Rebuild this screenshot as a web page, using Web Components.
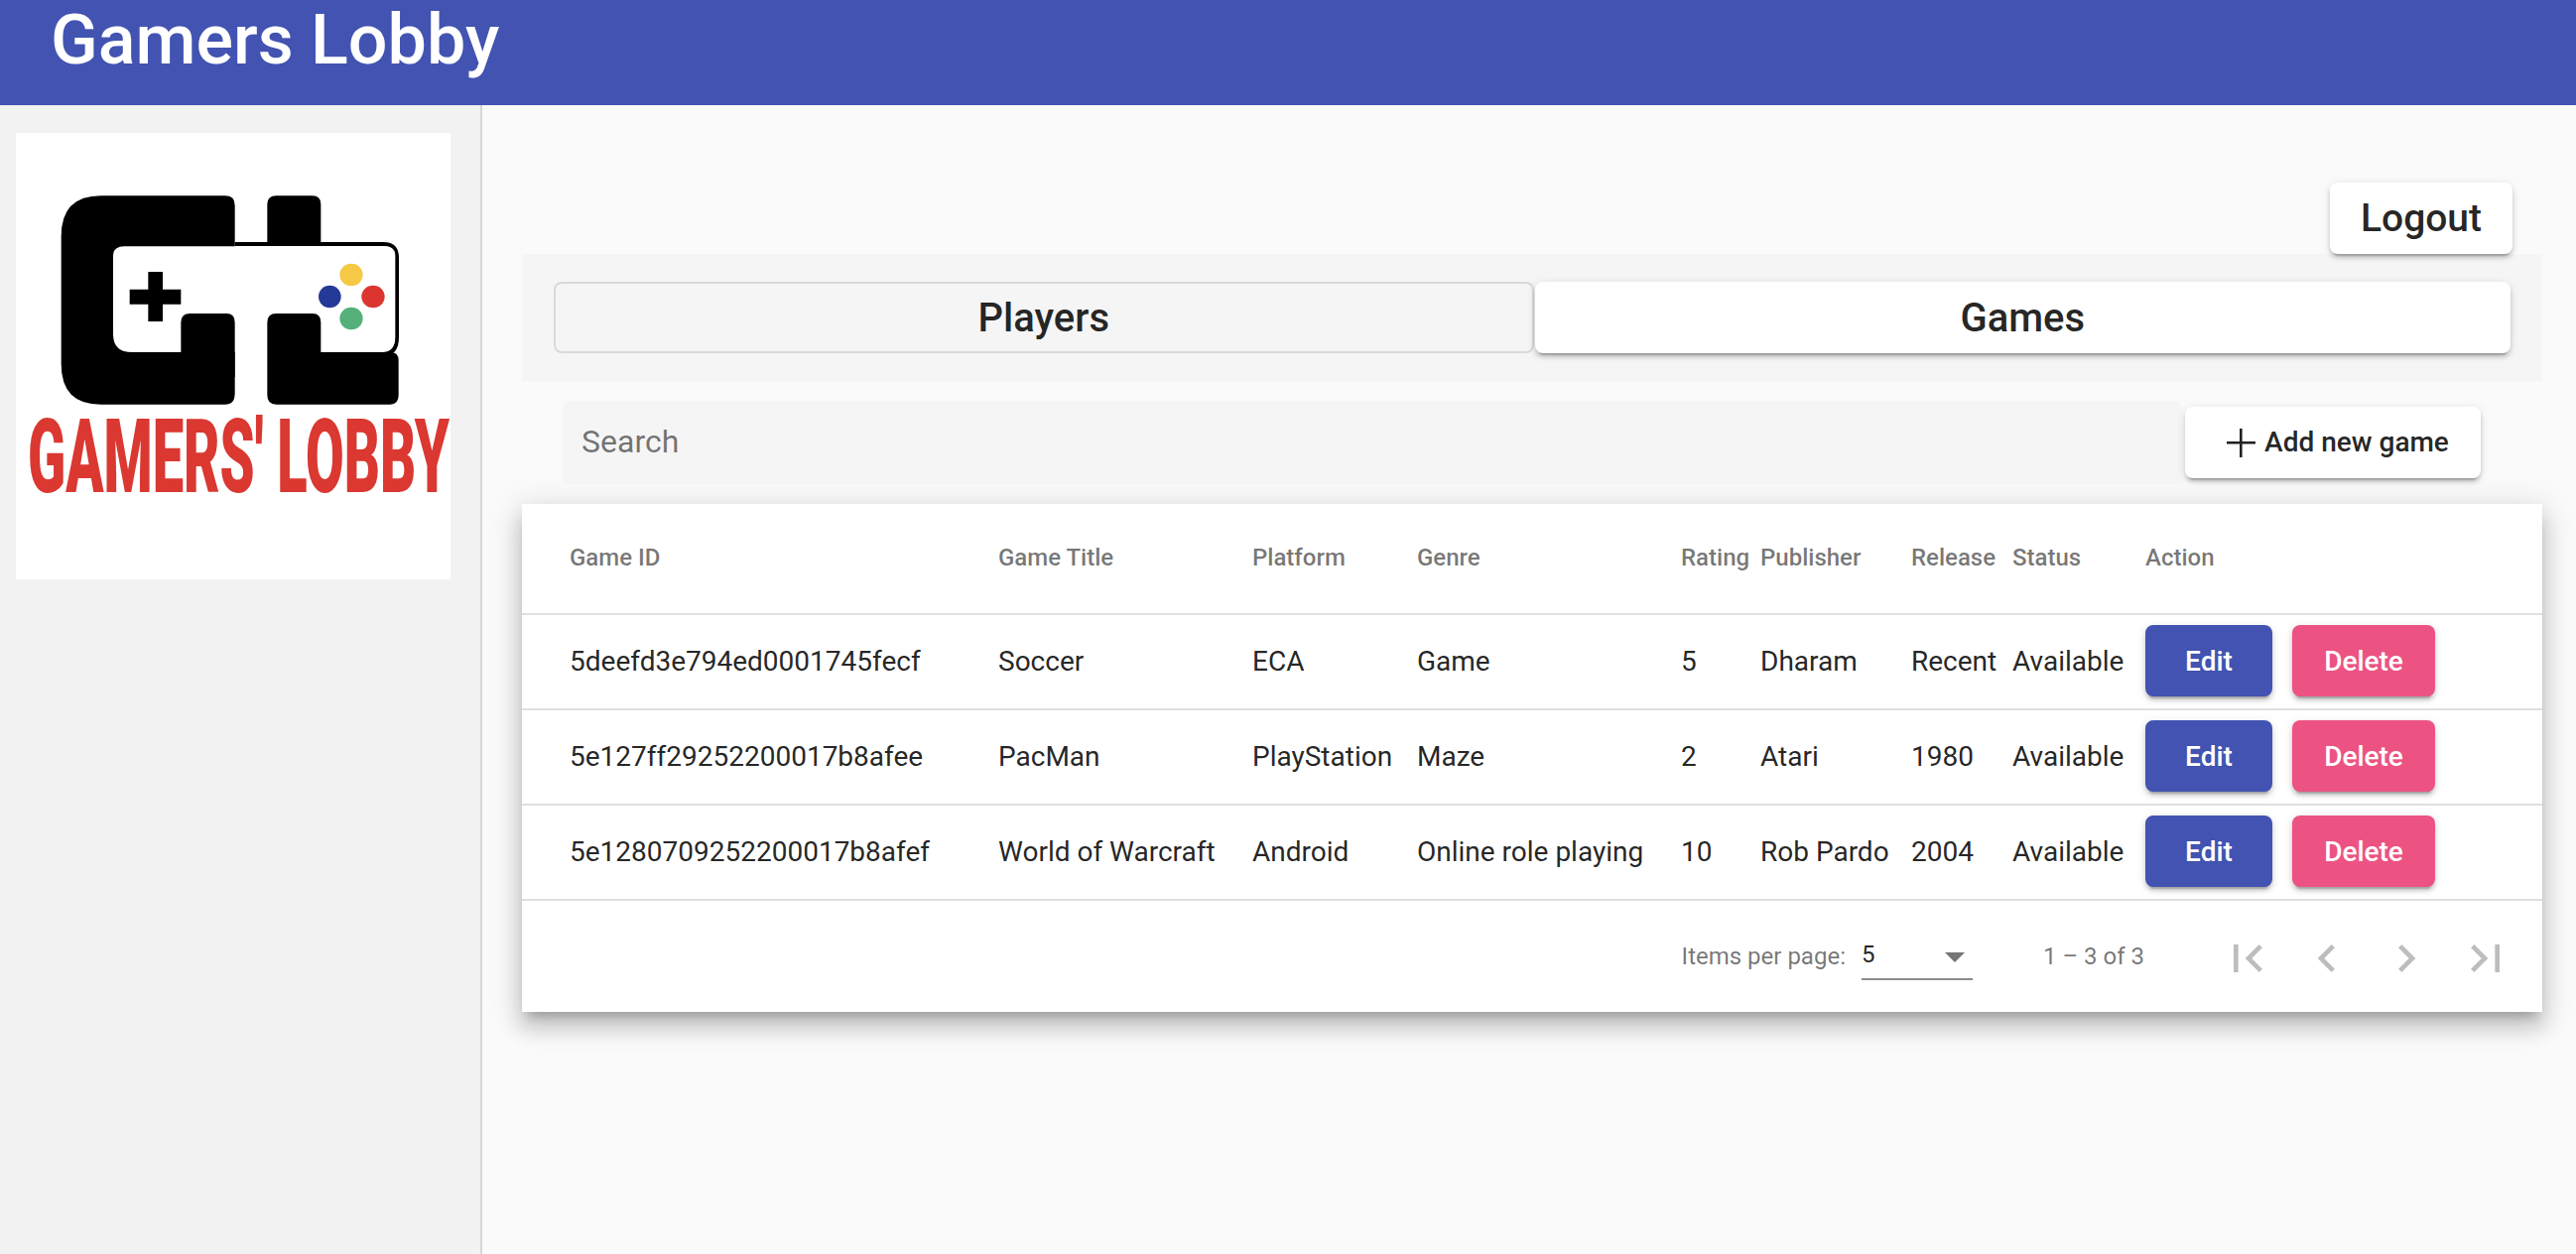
<!DOCTYPE html>
<html>
<head>
<meta charset="utf-8">
<title>Gamers Lobby</title>
<style>
  html, body { margin: 0; height: 100%; }
  body { font-family: Roboto, "Noto Sans", sans-serif; background: #fafafa; color: rgba(0,0,0,.87); overflow: hidden; }
</style>
</head>
<body>
<gl-app>
  <gl-toolbar slot="top">Gamers Lobby</gl-toolbar>
  <gl-sidebar slot="side"><gl-logo></gl-logo></gl-sidebar>
  <gl-logout-bar><gl-button size="logout">Logout</gl-button></gl-logout-bar>
  <gl-tabs>
    <gl-tab>Players</gl-tab>
    <gl-tab active>Games</gl-tab>
  </gl-tabs>
  <gl-search-bar>
    <gl-search>Search</gl-search>
    <gl-button size="add" slot="action"><gl-plus></gl-plus>Add new game</gl-button>
  </gl-search-bar>
  <gl-card>
    <gl-row header>
      <span>Game ID</span><span>Game Title</span><span>Platform</span><span>Genre</span><span>Rating</span><span>Publisher</span><span>Release</span><span>Status</span><span>Action</span>
    </gl-row>
    <gl-row>
      <span>5deefd3e794ed0001745fecf</span><span>Soccer</span><span>ECA</span><span>Game</span><span>5</span><span>Dharam</span><span>Recent</span><span>Available</span>
      <gl-actions><gl-button color="primary">Edit</gl-button><gl-button color="accent">Delete</gl-button></gl-actions>
    </gl-row>
    <gl-row>
      <span>5e127ff29252200017b8afee</span><span>PacMan</span><span>PlayStation</span><span>Maze</span><span>2</span><span>Atari</span><span>1980</span><span>Available</span>
      <gl-actions><gl-button color="primary">Edit</gl-button><gl-button color="accent">Delete</gl-button></gl-actions>
    </gl-row>
    <gl-row>
      <span>5e1280709252200017b8afef</span><span>World of Warcraft</span><span>Android</span><span>Online role playing</span><span>10</span><span>Rob Pardo</span><span>2004</span><span>Available</span>
      <gl-actions><gl-button color="primary">Edit</gl-button><gl-button color="accent">Delete</gl-button></gl-actions>
    </gl-row>
    <gl-paginator></gl-paginator>
  </gl-card>
</gl-app>

<script>
  // small helper so every element just declares its shadow markup
  class ShadowElement extends HTMLElement {
    constructor() {
      super();
      this.attachShadow({ mode: "open" });
      this.shadowRoot.innerHTML = this.markup();
    }
    markup() { return "<slot></slot>"; }
  }

  class GlApp extends ShadowElement {
    markup() {
      return `
        <style>
          :host { display: flex; flex-direction: column; height: 100vh; }
          .body { flex: 1; display: flex; min-height: 0; }
          main { flex: 1; min-width: 0; padding: 78px 34px 0 40px; }
        </style>
        <slot name="top"></slot>
        <div class="body">
          <slot name="side"></slot>
          <main><slot></slot></main>
        </div>`;
    }
  }

  class GlToolbar extends ShadowElement {
    markup() {
      return `
        <style>
          :host { display: block; flex: none; height: 106px; background: #4253b1; color: #fff; box-sizing: border-box; padding-left: 51px; }
          h1 { margin: 0; font: 500 70px/80px Roboto, sans-serif; }
        </style>
        <h1><slot></slot></h1>`;
    }
  }

  class GlSidebar extends ShadowElement {
    markup() {
      return `
        <style>
          :host { display: block; flex: none; width: 486px; box-sizing: border-box; background: #f2f2f2; border-right: 2px solid #d6d6d6; padding: 28px 0 0 16px; }
        </style>
        <slot></slot>`;
    }
  }

  class GlLogo extends ShadowElement {
    markup() {
      return `
        <style>
          :host { display: block; width: 438px; height: 450px; background: #fff; }
          svg { display: block; }
          text { font-family: Roboto, sans-serif; font-weight: 900; font-size: 309px; fill: #da3831; }
        </style>
        <svg width="438" height="450" viewBox="-72 -138 1314 1350" role="img" aria-label="Gamers' Lobby logo">
          <path d="M185 52H560Q590 52 590 80V650Q590 683 560 683H185Q65 683 65 560V175Q65 52 185 52Z"/>
          <path d="M715 52H825Q850 52 850 78V200H688V78Q688 52 715 52Z"/>
          <path d="M590 198H1040Q1080 198 1080 240V480Q1080 530 1040 530" fill="none" stroke="#000" stroke-width="12"/>
          <path d="M255 205H1045Q1075 205 1075 235V480Q1075 525 1025 525H280Q222 525 222 470V235Q222 205 255 205Z" fill="#fff"/>
          <path d="M455 408H565Q590 408 590 435V600H427V435Q427 408 455 408Z"/>
          <path d="M715 408H825Q850 408 850 435V525H1060Q1085 525 1085 550V655Q1085 683 1060 683H715Q688 683 688 655V435Q688 408 715 408Z"/>
          <path d="M272 335H328V282H372V335H427V380H372V432H328V380H272Z"/>
          <ellipse cx="942" cy="291" rx="35" ry="34" fill="#f5c945"/>
          <ellipse cx="877" cy="357" rx="34" ry="34" fill="#253a96"/>
          <ellipse cx="1008" cy="357" rx="35" ry="34" fill="#dc3530"/>
          <ellipse cx="942" cy="423" rx="35" ry="34" fill="#55b07a"/>
          <text id="wordmark" y="948">GAMERS' LOBBY</text>
        </svg>`;
    }
    connectedCallback() {
      // squeeze the wordmark into its slot, it's a condensed face in the original
      const text = this.shadowRoot.getElementById("wordmark");
      const sx = 1275 / text.getComputedTextLength();
      text.setAttribute("transform", `translate(-36 0) scale(${sx} 1)`);
    }
  }

  class GlLogoutBar extends ShadowElement {
    markup() {
      return `
        <style>:host { display: flex; justify-content: flex-end; padding-right: 30px; }</style>
        <slot></slot>`;
    }
  }

  class GlButton extends ShadowElement {
    markup() {
      return `
        <style>
          :host { display: inline-flex; align-items: center; justify-content: center; box-sizing: border-box; height: 72px; border-radius: 8px; background: #fff; color: rgba(0,0,0,.87); font: 500 28px/72px Roboto, sans-serif; flex: none; cursor: pointer;
            box-shadow: 0 6px 2px -4px rgba(0,0,0,.2), 0 4px 4px 0 rgba(0,0,0,.14), 0 2px 10px 0 rgba(0,0,0,.12); }
          :host([size="logout"]) { width: 184px; font-size: 39px; }
          :host([size="add"]) { width: 298px; margin-top: 6px; gap: 6px; padding-left: 6px; }
          :host([color="primary"]) { width: 128px; background: #4253b1; color: #fff; padding-top: 1px; }
          :host([color="accent"]) { width: 144px; background: #ec5383; color: #fff; padding-top: 1px; }
        </style>
        <slot></slot>`;
    }
  }

  class GlPlus extends ShadowElement {
    markup() {
      return `
        <style>:host { display: block; width: 36px; height: 36px; } svg { display: block; }</style>
        <svg width="36" height="36" viewBox="0 0 36 36"><path d="M17 4h2.6v13H33v2.6H19.6V33H17V19.6H4V17h13z" fill="#212121"/></svg>`;
    }
  }

  class GlTabs extends ShadowElement {
    markup() {
      return `
        <style>:host { display: flex; gap: 1px; background: #f5f5f5; padding: 28px 32px; }</style>
        <slot></slot>`;
    }
  }

  class GlTab extends ShadowElement {
    markup() {
      return `
        <style>
          :host { flex: 1; display: flex; align-items: center; justify-content: center; box-sizing: border-box; height: 72px; border-radius: 8px; border: 2px solid #d9d9d9; font: 500 40px Roboto, sans-serif; color: rgba(0,0,0,.87); cursor: pointer; }
          :host([active]) { border: 0; background: #fff; box-shadow: 0 6px 2px -4px rgba(0,0,0,.2), 0 4px 4px 0 rgba(0,0,0,.14), 0 2px 10px 0 rgba(0,0,0,.12); }
        </style>
        <slot></slot>`;
    }
  }

  class GlSearchBar extends ShadowElement {
    markup() {
      return `
        <style>:host { display: flex; align-items: flex-start; padding: 20px 62px 20px 41px; }</style>
        <slot></slot><slot name="action"></slot>`;
    }
  }

  class GlSearch extends ShadowElement {
    markup() {
      return `
        <style>
          :host { flex: 1; display: flex; align-items: center; box-sizing: border-box; height: 84px; padding: 0 0 2px 19px; margin-right: 3px; background: #f5f5f5; border-radius: 8px 8px 0 0; color: rgba(0,0,0,.54); font: 400 32px Roboto, sans-serif; }
        </style>
        <slot></slot>`;
    }
  }

  class GlCard extends ShadowElement {
    markup() {
      return `
        <style>
          :host { display: block; background: #fff;
            box-shadow: 0 10px 10px -6px rgba(0,0,0,.2), 0 16px 20px 2px rgba(0,0,0,.14), 0 6px 28px 4px rgba(0,0,0,.12); }
        </style>
        <slot></slot>`;
    }
  }

  class GlRow extends ShadowElement {
    markup() {
      return `
        <style>
          :host { display: grid; grid-template-columns: 432px 256px 166px 266px 80px 152px 102px 134px 1fr; align-items: center; box-sizing: border-box; height: 96px; padding: 0 0 2px 48px; border-bottom: 2px solid #e0e0e0; font: 400 28px Roboto, sans-serif; color: rgba(0,0,0,.87); white-space: nowrap; }
          :host([header]) { height: 112px; font-size: 24px; font-weight: 500; color: rgba(0,0,0,.54); }
        </style>
        <slot></slot>`;
    }
  }

  class GlActions extends ShadowElement {
    markup() {
      return `
        <style>:host { display: flex; gap: 20px; }</style>
        <slot></slot>`;
    }
  }

  class GlPageIcon extends ShadowElement {
    markup() {
      const d = {
        first: "M18.41 16.59L13.82 12l4.59-4.59L17 6l-6 6 6 6zM6 6h2v12H6z",
        prev: "M15.41 7.41L14 6l-6 6 6 6 1.41-1.41L10.83 12z",
        next: "M10 6L8.59 7.41 13.17 12l-4.58 4.59L10 18l6-6z",
        last: "M5.59 7.41L10.18 12l-4.59 4.59L7 18l6-6-6-6zM16 6h2v12h-2z",
      }[this.getAttribute("name")];
      return `
        <style>
          :host { display: flex; align-items: center; justify-content: center; width: 80px; height: 80px; }
          svg { display: block; fill: rgba(0,0,0,.26); }
        </style>
        <svg width="56" height="56" viewBox="0 0 24 24"><path d="${d}"/></svg>`;
    }
  }

  class GlPaginator extends ShadowElement {
    markup() {
      return `
        <style>
          :host { display: flex; align-items: center; justify-content: flex-end; height: 112px; box-sizing: border-box; padding: 0 17px 0 0; font: 400 24px Roboto, sans-serif; color: rgba(0,0,0,.54); }
          .select { position: relative; width: 112px; height: 48px; margin: 0 71px 0 16px; border-bottom: 2px solid #8c8c8c; box-sizing: border-box; display: flex; align-items: center; color: rgba(0,0,0,.87); padding-bottom: 2px; }
          .select i { position: absolute; right: 8px; top: 20px; width: 0; height: 0; border: 10px solid transparent; border-top-color: rgba(0,0,0,.54); border-bottom: 0; }
          .range { margin-right: 64px; }
          .icons { display: flex; margin-top: 4px; }
        </style>
        <span>Items per page:</span>
        <div class="select"><span>5</span><i></i></div>
        <span class="range">1 – 3 of 3</span>
        <div class="icons">
          <gl-page-icon name="first"></gl-page-icon>
          <gl-page-icon name="prev"></gl-page-icon>
          <gl-page-icon name="next"></gl-page-icon>
          <gl-page-icon name="last"></gl-page-icon>
        </div>`;
    }
  }

  customElements.define("gl-app", GlApp);
  customElements.define("gl-toolbar", GlToolbar);
  customElements.define("gl-sidebar", GlSidebar);
  customElements.define("gl-logo", GlLogo);
  customElements.define("gl-logout-bar", GlLogoutBar);
  customElements.define("gl-button", GlButton);
  customElements.define("gl-plus", GlPlus);
  customElements.define("gl-tabs", GlTabs);
  customElements.define("gl-tab", GlTab);
  customElements.define("gl-search-bar", GlSearchBar);
  customElements.define("gl-search", GlSearch);
  customElements.define("gl-card", GlCard);
  customElements.define("gl-row", GlRow);
  customElements.define("gl-actions", GlActions);
  customElements.define("gl-page-icon", GlPageIcon);
  customElements.define("gl-paginator", GlPaginator);
</script>
</body>
</html>
